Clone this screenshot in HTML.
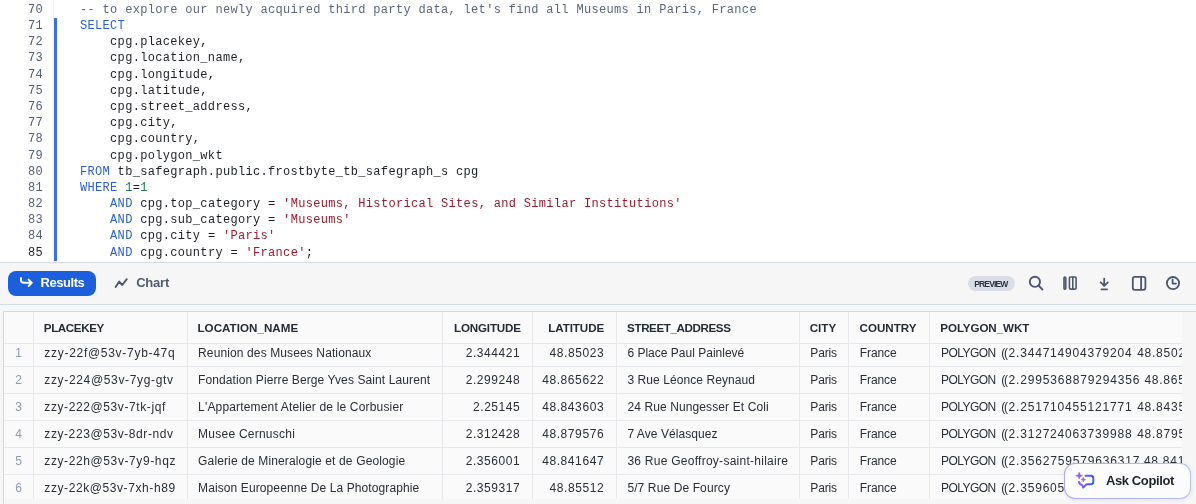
<!DOCTYPE html>
<html><head><meta charset="utf-8"><style>
*{box-sizing:border-box}
html,body{margin:0;padding:0}
body{width:1196px;height:504px;overflow:hidden;position:relative;background:#fff;font-family:"Liberation Sans",sans-serif}
.abs{position:absolute}
#root{position:absolute;left:0;top:0;width:1196px;height:504px;will-change:transform}
#ed{position:absolute;left:0;top:0;width:1196px;height:262px;background:#fff;overflow:hidden}
.ln{position:absolute;left:0;width:43px;text-align:right;font-family:"Liberation Mono",monospace;font-size:12px;letter-spacing:0.32px;line-height:16px;color:#56617a;white-space:pre}
.ln.act{color:#1f242c}
.cl{position:absolute;left:80px;font-family:"Liberation Mono",monospace;font-size:12px;letter-spacing:0.32px;line-height:16px;color:#1d2127;white-space:pre}
.k{color:#2c5fd6}.c{color:#5b6780}.n{color:#1f7a50}.s{color:#9a1c2e}
#bar{position:absolute;left:54px;top:18px;width:3px;height:243px;background:#3a6ff0}
#gut{position:absolute;left:53px;top:0;width:1px;height:262px;background:#f1f2f4}
#sep1{position:absolute;left:0;top:262px;width:1196px;height:1px;background:#d5dbe5}
#tb{position:absolute;left:0;top:263px;width:1196px;height:41px;background:#f6f6f6}
#sep2{position:absolute;left:0;top:304px;width:1196px;height:1px;background:#d5dbe5}
#low{position:absolute;left:0;top:305px;width:1196px;height:199px;background:#f6f6f6}
#btnres{position:absolute;left:8px;top:271px;width:88px;height:25px;border-radius:8px;background:#1b5fdd}
#pv{position:absolute;left:968px;top:276px;width:47px;height:15px;border-radius:8px;background:#d9dee6}
#tbl{position:absolute;left:3px;top:311px;width:1193px;height:193px;border-left:1px solid #d3d9e3;border-top:1px solid #d3d9e3;background:#f6f6f6}
#cells{position:absolute;left:4px;top:312px;width:1178px;height:187px;background:#fafafa}
.vl{position:absolute;top:312px;width:1px;height:187px;background:#e6e8ec}
.hl{position:absolute;left:4px;width:1178px;height:1px;background:#e6e8ec}
.rn{position:absolute;left:4px;width:29px;text-align:center;font-size:12px;line-height:20px;color:#8e9bb3}
.tx{position:absolute;white-space:pre;line-height:20px}
#clip{position:absolute;left:0;top:0;width:1182px;height:504px;overflow:hidden}
#cop{position:absolute;left:1064px;top:463px;width:127px;height:36px;border-radius:11px;border:1px solid transparent;background:linear-gradient(#fcfcfd,#fcfcfd) padding-box,linear-gradient(90deg,#b9a5f5,#aab9f8 60%,#b5c4f8) border-box;box-shadow:0 1px 4px rgba(60,60,120,.10)}
</style></head><body><div id="root">
<div id="ed">
<div id="gut"></div>
<div id="bar"></div>
<div class="ln" style="top:1.80px">70</div>
<div class="cl" style="top:1.80px"><span class="c">-- to explore our newly acquired third party data, let&#x27;s find all Museums in Paris, France</span></div>
<div class="ln" style="top:17.99px">71</div>
<div class="cl" style="top:17.99px"><span class="k">SELECT</span></div>
<div class="ln" style="top:34.18px">72</div>
<div class="cl" style="top:34.18px">    cpg.placekey,</div>
<div class="ln" style="top:50.37px">73</div>
<div class="cl" style="top:50.37px">    cpg.location_name,</div>
<div class="ln" style="top:66.56px">74</div>
<div class="cl" style="top:66.56px">    cpg.longitude,</div>
<div class="ln" style="top:82.75px">75</div>
<div class="cl" style="top:82.75px">    cpg.latitude,</div>
<div class="ln" style="top:98.94px">76</div>
<div class="cl" style="top:98.94px">    cpg.street_address,</div>
<div class="ln" style="top:115.13px">77</div>
<div class="cl" style="top:115.13px">    cpg.city,</div>
<div class="ln" style="top:131.32px">78</div>
<div class="cl" style="top:131.32px">    cpg.country,</div>
<div class="ln" style="top:147.51px">79</div>
<div class="cl" style="top:147.51px">    cpg.polygon_wkt</div>
<div class="ln" style="top:163.70px">80</div>
<div class="cl" style="top:163.70px"><span class="k">FROM</span> tb_safegraph.public.frostbyte_tb_safegraph_s cpg</div>
<div class="ln" style="top:179.89px">81</div>
<div class="cl" style="top:179.89px"><span class="k">WHERE</span> <span class="n">1</span>=<span class="n">1</span></div>
<div class="ln" style="top:196.08px">82</div>
<div class="cl" style="top:196.08px">    <span class="k">AND</span> cpg.top_category = <span class="s">&#x27;Museums, Historical Sites, and Similar Institutions&#x27;</span></div>
<div class="ln" style="top:212.27px">83</div>
<div class="cl" style="top:212.27px">    <span class="k">AND</span> cpg.sub_category = <span class="s">&#x27;Museums&#x27;</span></div>
<div class="ln" style="top:228.46px">84</div>
<div class="cl" style="top:228.46px">    <span class="k">AND</span> cpg.city = <span class="s">&#x27;Paris&#x27;</span></div>
<div class="ln act" style="top:244.65px">85</div>
<div class="cl" style="top:244.65px">    <span class="k">AND</span> cpg.country = <span class="s">&#x27;France&#x27;</span>;</div>
</div>
<div id="sep1"></div>
<div id="tb"></div>
<div id="sep2"></div>
<div id="low"></div>
<div id="btnres"></div>
<div id="pv"></div>
<svg class="abs" style="left:17px;top:274px" width="18" height="16" viewBox="0 0 18 16"><path d="M3.9 4 V5.8 Q3.9 8.8 6.9 8.8 H14.8 M11.6 5.6 L14.8 8.8 L11.6 12" fill="none" stroke="#fff" stroke-width="1.9" stroke-linecap="round" stroke-linejoin="round"/></svg><svg class="abs" style="left:113px;top:276px" width="17" height="14" viewBox="0 0 17 14"><path d="M2.6 11 L6.2 5.6 L9.2 9 L13.8 3.2" fill="none" stroke="#4b5770" stroke-width="1.9" stroke-linecap="round" stroke-linejoin="round"/></svg><svg class="abs" style="left:1026px;top:273px" width="20" height="20" viewBox="0 0 20 20"><circle cx="8.9" cy="8.8" r="5.1" fill="none" stroke="#4b5770" stroke-width="1.9"/><path d="M12.6 12.5 L16.5 16.6" stroke="#4b5770" stroke-width="1.9" stroke-linecap="round"/></svg><svg class="abs" style="left:1060px;top:273px" width="20" height="20" viewBox="0 0 20 20"><rect x="3.95" y="3.95" width="1.9" height="12.2" rx="0.95" fill="#8a94a8" stroke="#4b5770" stroke-width="1.5"/><rect x="9.4" y="4" width="6.7" height="12.1" rx="1" fill="none" stroke="#4b5770" stroke-width="1.6"/><path d="M12.8 4 V16.1" stroke="#4b5770" stroke-width="1.6"/></svg><svg class="abs" style="left:1094px;top:273px" width="20" height="20" viewBox="0 0 20 20"><path d="M10.2 5.6 V12.9 M6.7 9.3 L10.2 12.9 L13.8 9.3" fill="none" stroke="#4b5770" stroke-width="1.8" stroke-linecap="round" stroke-linejoin="round"/><path d="M7.5 16.4 H13" stroke="#4b5770" stroke-width="1.8" stroke-linecap="round"/></svg><svg class="abs" style="left:1129px;top:273px" width="20" height="20" viewBox="0 0 20 20"><rect x="3.8" y="3.8" width="12.6" height="13" rx="2" fill="none" stroke="#4b5770" stroke-width="1.8"/><path d="M12.1 3.8 V16.8" stroke="#4b5770" stroke-width="1.8"/></svg><svg class="abs" style="left:1163px;top:273px" width="20" height="20" viewBox="0 0 20 20"><circle cx="10" cy="10.1" r="6.1" fill="none" stroke="#4b5770" stroke-width="1.8"/><path d="M9.6 6.6 V10.6 H13" fill="none" stroke="#4b5770" stroke-width="1.8" stroke-linecap="round" stroke-linejoin="round"/></svg>
<div class="tx" style="left:40.60px;top:273.20px;font-weight:700;font-size:13px;letter-spacing:-0.455px;color:#ffffff">Results</div>
<div class="tx" style="left:136.20px;top:273.20px;font-weight:700;font-size:13px;letter-spacing:-0.230px;color:#525d72">Chart</div>
<div class="tx" style="left:974.20px;top:273.95px;font-weight:700;font-size:8.5px;letter-spacing:-0.846px;color:#2d3442">PREVIEW</div>
<div id="tbl"></div>
<div id="cells"></div>
<div id="clip">
<div class="vl" style="left:33px"></div>
<div class="vl" style="left:187px"></div>
<div class="vl" style="left:442px"></div>
<div class="vl" style="left:532px"></div>
<div class="vl" style="left:616px"></div>
<div class="vl" style="left:799px"></div>
<div class="vl" style="left:848px"></div>
<div class="vl" style="left:929px"></div>
<div class="hl" style="top:343px"></div>
<div class="hl" style="top:366px"></div>
<div class="hl" style="top:393px"></div>
<div class="hl" style="top:420px"></div>
<div class="hl" style="top:447px"></div>
<div class="hl" style="top:474px"></div>
<div class="rn" style="top:342.74px">1</div>
<div class="rn" style="top:369.74px">2</div>
<div class="rn" style="top:396.74px">3</div>
<div class="rn" style="top:423.74px">4</div>
<div class="rn" style="top:450.74px">5</div>
<div class="rn" style="top:477.74px">6</div>
<div class="tx" style="left:43.80px;top:317.58px;font-weight:700;font-size:11.6px;letter-spacing:-0.386px;color:#262c36">PLACEKEY</div>
<div class="tx" style="left:197.50px;top:317.58px;font-weight:700;font-size:11.6px;letter-spacing:0.031px;color:#262c36">LOCATION_NAME</div>
<div class="tx" style="left:454.00px;top:317.58px;font-weight:700;font-size:11.6px;letter-spacing:-0.167px;color:#262c36">LONGITUDE</div>
<div class="tx" style="left:548.20px;top:317.58px;font-weight:700;font-size:11.6px;letter-spacing:-0.061px;color:#262c36">LATITUDE</div>
<div class="tx" style="left:627.10px;top:317.58px;font-weight:700;font-size:11.6px;letter-spacing:-0.388px;color:#262c36">STREET_ADDRESS</div>
<div class="tx" style="left:809.70px;top:317.58px;font-weight:700;font-size:11.6px;letter-spacing:0.041px;color:#262c36">CITY</div>
<div class="tx" style="left:859.50px;top:317.58px;font-weight:700;font-size:11.6px;letter-spacing:0.007px;color:#262c36">COUNTRY</div>
<div class="tx" style="left:940.30px;top:317.58px;font-weight:700;font-size:11.6px;letter-spacing:-0.077px;color:#262c36">POLYGON_WKT</div>
<div class="tx" style="left:44.30px;top:342.74px;font-weight:400;font-size:12px;letter-spacing:0.711px;color:#2a2f38">zzy-22f@53v-7yb-47q</div>
<div class="tx" style="left:198.10px;top:342.74px;font-weight:400;font-size:12px;letter-spacing:0.115px;color:#2a2f38">Reunion des Musees Nationaux</div>
<div class="tx" style="left:465.70px;top:342.74px;font-weight:400;font-size:12px;letter-spacing:0.560px;color:#2a2f38">2.344421</div>
<div class="tx" style="left:549.60px;top:342.74px;font-weight:400;font-size:12px;letter-spacing:0.560px;color:#2a2f38">48.85023</div>
<div class="tx" style="left:627.40px;top:342.74px;font-weight:400;font-size:12px;letter-spacing:0.007px;color:#2a2f38">6 Place Paul Painlevé</div>
<div class="tx" style="left:810.30px;top:342.74px;font-weight:400;font-size:12px;letter-spacing:-0.160px;color:#2a2f38">Paris</div>
<div class="tx" style="left:859.80px;top:342.74px;font-weight:400;font-size:12px;letter-spacing:-0.115px;color:#2a2f38">France</div>
<div class="tx" style="left:940.90px;top:342.74px;font-weight:400;font-size:12px;letter-spacing:-0.515px;color:#2a2f38">POLYGON</div>
<div class="tx" style="left:1001.30px;top:342.74px;font-weight:400;font-size:12px;letter-spacing:-1.200px;color:#2a2f38">((</div>
<div class="tx" style="left:1008.60px;top:342.74px;font-weight:400;font-size:12px;letter-spacing:0.804px;color:#2a2f38">2.344714904379204</div>
<div class="tx" style="left:1137.20px;top:342.74px;font-weight:400;font-size:12px;letter-spacing:0.750px;color:#2a2f38">48.85023 2.3447</div>
<div class="tx" style="left:44.30px;top:369.74px;font-weight:400;font-size:12px;letter-spacing:0.656px;color:#2a2f38">zzy-224@53v-7yg-gtv</div>
<div class="tx" style="left:198.10px;top:369.74px;font-weight:400;font-size:12px;letter-spacing:0.100px;color:#2a2f38">Fondation Pierre Berge Yves Saint Laurent</div>
<div class="tx" style="left:465.70px;top:369.74px;font-weight:400;font-size:12px;letter-spacing:0.560px;color:#2a2f38">2.299248</div>
<div class="tx" style="left:542.20px;top:369.74px;font-weight:400;font-size:12px;letter-spacing:0.581px;color:#2a2f38">48.865622</div>
<div class="tx" style="left:627.40px;top:369.74px;font-weight:400;font-size:12px;letter-spacing:0.078px;color:#2a2f38">3 Rue Léonce Reynaud</div>
<div class="tx" style="left:810.30px;top:369.74px;font-weight:400;font-size:12px;letter-spacing:-0.160px;color:#2a2f38">Paris</div>
<div class="tx" style="left:859.80px;top:369.74px;font-weight:400;font-size:12px;letter-spacing:-0.115px;color:#2a2f38">France</div>
<div class="tx" style="left:940.90px;top:369.74px;font-weight:400;font-size:12px;letter-spacing:-0.515px;color:#2a2f38">POLYGON</div>
<div class="tx" style="left:1001.30px;top:369.74px;font-weight:400;font-size:12px;letter-spacing:-1.200px;color:#2a2f38">((</div>
<div class="tx" style="left:1008.60px;top:369.74px;font-weight:400;font-size:12px;letter-spacing:0.829px;color:#2a2f38">2.2995368879294356</div>
<div class="tx" style="left:1144.40px;top:369.74px;font-weight:400;font-size:12px;letter-spacing:0.750px;color:#2a2f38">48.865622 2.2</div>
<div class="tx" style="left:44.30px;top:396.74px;font-weight:400;font-size:12px;letter-spacing:0.601px;color:#2a2f38">zzy-222@53v-7tk-jqf</div>
<div class="tx" style="left:198.10px;top:396.74px;font-weight:400;font-size:12px;letter-spacing:0.169px;color:#2a2f38">L&#x27;Appartement Atelier de le Corbusier</div>
<div class="tx" style="left:473.10px;top:396.74px;font-weight:400;font-size:12px;letter-spacing:0.533px;color:#2a2f38">2.25145</div>
<div class="tx" style="left:542.20px;top:396.74px;font-weight:400;font-size:12px;letter-spacing:0.581px;color:#2a2f38">48.843603</div>
<div class="tx" style="left:627.40px;top:396.74px;font-weight:400;font-size:12px;letter-spacing:0.110px;color:#2a2f38">24 Rue Nungesser Et Coli</div>
<div class="tx" style="left:810.30px;top:396.74px;font-weight:400;font-size:12px;letter-spacing:-0.160px;color:#2a2f38">Paris</div>
<div class="tx" style="left:859.80px;top:396.74px;font-weight:400;font-size:12px;letter-spacing:-0.115px;color:#2a2f38">France</div>
<div class="tx" style="left:940.90px;top:396.74px;font-weight:400;font-size:12px;letter-spacing:-0.515px;color:#2a2f38">POLYGON</div>
<div class="tx" style="left:1001.30px;top:396.74px;font-weight:400;font-size:12px;letter-spacing:-1.200px;color:#2a2f38">((</div>
<div class="tx" style="left:1008.60px;top:396.74px;font-weight:400;font-size:12px;letter-spacing:0.804px;color:#2a2f38">2.251710455121771</div>
<div class="tx" style="left:1137.20px;top:396.74px;font-weight:400;font-size:12px;letter-spacing:0.750px;color:#2a2f38">48.84357 2.25</div>
<div class="tx" style="left:44.30px;top:423.74px;font-weight:400;font-size:12px;letter-spacing:0.582px;color:#2a2f38">zzy-223@53v-8dr-ndv</div>
<div class="tx" style="left:198.10px;top:423.74px;font-weight:400;font-size:12px;letter-spacing:0.242px;color:#2a2f38">Musee Cernuschi</div>
<div class="tx" style="left:465.70px;top:423.74px;font-weight:400;font-size:12px;letter-spacing:0.560px;color:#2a2f38">2.312428</div>
<div class="tx" style="left:542.20px;top:423.74px;font-weight:400;font-size:12px;letter-spacing:0.581px;color:#2a2f38">48.879576</div>
<div class="tx" style="left:627.40px;top:423.74px;font-weight:400;font-size:12px;letter-spacing:0.068px;color:#2a2f38">7 Ave Vélasquez</div>
<div class="tx" style="left:810.30px;top:423.74px;font-weight:400;font-size:12px;letter-spacing:-0.160px;color:#2a2f38">Paris</div>
<div class="tx" style="left:859.80px;top:423.74px;font-weight:400;font-size:12px;letter-spacing:-0.115px;color:#2a2f38">France</div>
<div class="tx" style="left:940.90px;top:423.74px;font-weight:400;font-size:12px;letter-spacing:-0.515px;color:#2a2f38">POLYGON</div>
<div class="tx" style="left:1001.30px;top:423.74px;font-weight:400;font-size:12px;letter-spacing:-1.200px;color:#2a2f38">((</div>
<div class="tx" style="left:1008.60px;top:423.74px;font-weight:400;font-size:12px;letter-spacing:0.804px;color:#2a2f38">2.312724063739988</div>
<div class="tx" style="left:1137.20px;top:423.74px;font-weight:400;font-size:12px;letter-spacing:0.750px;color:#2a2f38">48.879576 2.31</div>
<div class="tx" style="left:44.30px;top:450.74px;font-weight:400;font-size:12px;letter-spacing:0.604px;color:#2a2f38">zzy-22h@53v-7y9-hqz</div>
<div class="tx" style="left:198.10px;top:450.74px;font-weight:400;font-size:12px;letter-spacing:0.137px;color:#2a2f38">Galerie de Mineralogie et de Geologie</div>
<div class="tx" style="left:465.70px;top:450.74px;font-weight:400;font-size:12px;letter-spacing:0.560px;color:#2a2f38">2.356001</div>
<div class="tx" style="left:542.20px;top:450.74px;font-weight:400;font-size:12px;letter-spacing:0.581px;color:#2a2f38">48.841647</div>
<div class="tx" style="left:627.40px;top:450.74px;font-weight:400;font-size:12px;letter-spacing:0.260px;color:#2a2f38">36 Rue Geoffroy-saint-hilaire</div>
<div class="tx" style="left:810.30px;top:450.74px;font-weight:400;font-size:12px;letter-spacing:-0.160px;color:#2a2f38">Paris</div>
<div class="tx" style="left:859.80px;top:450.74px;font-weight:400;font-size:12px;letter-spacing:-0.115px;color:#2a2f38">France</div>
<div class="tx" style="left:940.90px;top:450.74px;font-weight:400;font-size:12px;letter-spacing:-0.515px;color:#2a2f38">POLYGON</div>
<div class="tx" style="left:1001.30px;top:450.74px;font-weight:400;font-size:12px;letter-spacing:-1.200px;color:#2a2f38">((</div>
<div class="tx" style="left:1008.60px;top:450.74px;font-weight:400;font-size:12px;letter-spacing:0.829px;color:#2a2f38">2.3562759579636317</div>
<div class="tx" style="left:1143.90px;top:450.74px;font-weight:400;font-size:12px;letter-spacing:0.750px;color:#2a2f38">48.841647 2.3</div>
<div class="tx" style="left:44.30px;top:477.74px;font-weight:400;font-size:12px;letter-spacing:0.586px;color:#2a2f38">zzy-22k@53v-7xh-h89</div>
<div class="tx" style="left:198.10px;top:477.74px;font-weight:400;font-size:12px;letter-spacing:0.102px;color:#2a2f38">Maison Europeenne De La Photographie</div>
<div class="tx" style="left:465.70px;top:477.74px;font-weight:400;font-size:12px;letter-spacing:0.560px;color:#2a2f38">2.359317</div>
<div class="tx" style="left:549.60px;top:477.74px;font-weight:400;font-size:12px;letter-spacing:0.560px;color:#2a2f38">48.85512</div>
<div class="tx" style="left:627.40px;top:477.74px;font-weight:400;font-size:12px;letter-spacing:0.112px;color:#2a2f38">5/7 Rue De Fourcy</div>
<div class="tx" style="left:810.30px;top:477.74px;font-weight:400;font-size:12px;letter-spacing:-0.160px;color:#2a2f38">Paris</div>
<div class="tx" style="left:859.80px;top:477.74px;font-weight:400;font-size:12px;letter-spacing:-0.115px;color:#2a2f38">France</div>
<div class="tx" style="left:940.90px;top:477.74px;font-weight:400;font-size:12px;letter-spacing:-0.515px;color:#2a2f38">POLYGON</div>
<div class="tx" style="left:1001.30px;top:477.74px;font-weight:400;font-size:12px;letter-spacing:-1.200px;color:#2a2f38">((</div>
<div class="tx" style="left:1008.60px;top:477.74px;font-weight:400;font-size:12px;letter-spacing:0.804px;color:#2a2f38">2.359605079636317</div>
<div class="tx" style="left:1137.20px;top:477.74px;font-weight:400;font-size:12px;letter-spacing:0.750px;color:#2a2f38">48.85512 2.35</div>
</div>
<div id="cop"></div>
<svg class="abs" style="left:1070px;top:466px" width="30" height="28" viewBox="0 0 30 28"><defs><linearGradient id="g" gradientUnits="userSpaceOnUse" x1="8" y1="0" x2="24" y2="0"><stop offset="0" stop-color="#8e5cf7"/><stop offset="1" stop-color="#2f60f0"/></linearGradient></defs>
<path d="M15.4 9.7 H20.8 Q23.3 9.7 23.3 12.2 V15.8 Q23.3 18.3 20.8 18.3 H16.6 L13.2 21.6 L12.4 19.2 Q9.2 18.4 9 15.9" fill="none" stroke="url(#g)" stroke-width="1.9" stroke-linecap="round" stroke-linejoin="round"/>
<path d="M9.20 6.30 L10.08 8.82 L12.60 9.70 L10.08 10.58 L9.20 13.10 L8.32 10.58 L5.80 9.70 L8.32 8.82Z" fill="#8b5cf6" stroke="#8b5cf6" stroke-width="0.6" stroke-linejoin="round"/>
<path d="M13.30 11.30 L13.94 12.96 L15.60 13.60 L13.94 14.24 L13.30 15.90 L12.66 14.24 L11.00 13.60 L12.66 12.96Z" fill="#7d62f4" stroke="#7d62f4" stroke-width="0.5" stroke-linejoin="round"/></svg>
<div class="tx" style="left:1105.90px;top:470.50px;font-weight:700;font-size:13px;letter-spacing:-0.379px;color:#1d222b">Ask Copilot</div>
</div></body></html>
